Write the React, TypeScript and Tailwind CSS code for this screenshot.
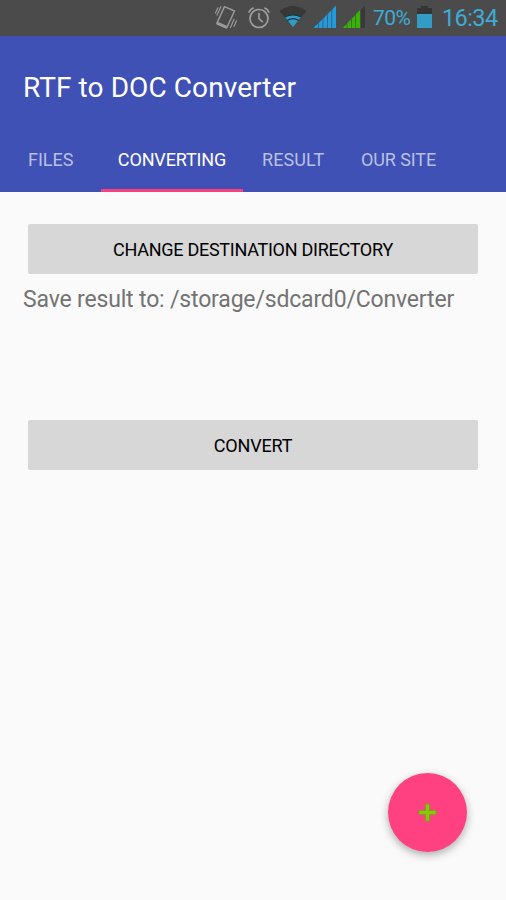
function VibrateIcon() {
  return (
    <svg className="w-[24px] h-[26px]" viewBox="0 0 24 26" fill="none" stroke="#999999">
      <path d="M10.500 2.600 20.500 7 12.800 23.800 2.800 19.400Z" strokeWidth="1.500" strokeLinejoin="round" />
      <path d="M3 19.200 12.800 23.400" strokeWidth="3" />
      <path d="M7 2.300 2.800 11.500M4 3.500 1.200 9.500M20.300 14.800 16.200 24M22.600 16.500 19.800 22.700" strokeWidth="1.200" />
    </svg>
  );
}

function AlarmIcon() {
  return (
    <svg className="w-[24px] h-[24px]" viewBox="0 0 24 24" fill="none" stroke="#a0a0a0">
      <circle cx="12" cy="13.500" r="9" strokeWidth="1.700" />
      <path d="M12 7.800v5.800l3.800 3.600" strokeWidth="1.600" />
      <path d="M1.700 7.600Q3.200 4.200 6.600 2.800M17.400 2.800Q20.800 4.200 22.300 7.600" strokeWidth="1.700" />
    </svg>
  );
}

function WifiIcon() {
  return (
    <svg className="w-[28px] h-[22px]" viewBox="0 0 28 22">
      <path d="M0.500 5Q14-5 27.500 5L14 21.300Z" fill="#383838" />
      <path d="M5.600 10.800Q14 6.500 22.400 10.800L14 21.300Z" fill="#2f9cc4" />
      <path d="M5.800 11Q14 6.600 22.200 11M8.200 14.500Q14 10.800 19.800 14.500" fill="none" stroke="#18343f" strokeWidth="1.200" />
    </svg>
  );
}

function App() {
  return (
    <div className="relative w-[506px] h-[900px] overflow-hidden bg-[#fafafa] font-['Roboto',sans-serif]">
      <div className="h-[36px] bg-[#4b4b4b] flex items-start text-[#3eacd6] whitespace-nowrap">
        <div className="ml-[214px] mt-[4px]">
          <VibrateIcon />
        </div>
        <div className="ml-[9px] mt-[5px]">
          <AlarmIcon />
        </div>
        <div className="ml-[8px] mt-[6px]">
          <WifiIcon />
        </div>
        <svg className="w-[24px] h-[24px] ml-[6px] mt-[5px]" viewBox="0 0 24 24" fill="#229bdc">
          <path d="M1 23V22L5 18.500V23ZM5.700 23V18L9.600 14V23ZM10.300 23V13.500L14 9.500V23ZM14.700 23V9L18.500 5V23ZM19.200 23V4.500L23 0.500V23Z" />
        </svg>
        <svg className="w-[24px] h-[24px] ml-[6px] mt-[5px]" viewBox="0 0 24 24" fill="#35b400">
          <path d="M18 23V4.500L22 0.500V23Z" fill="#393939" />
          <path d="M0.500 23V22L3.700 19V23ZM4.400 23V18L8 14.500V23ZM8.700 23V13.700L12.300 10V23ZM13 23V9L17 5V23Z" />
        </svg>
        <div className="w-[38px] ml-[6px] mt-[3px] text-[21px] leading-[30px] tracking-[-0.6px]">70%</div>
        <svg className="w-[15px] h-[22px] ml-[6px] mt-[6px]" viewBox="0 0 15 22">
          <path d="M0 22V2H4V0H11V2H15V22Z" fill="#353535" />
          <path d="M0 8H15V22H0Z" fill="#339cc3" />
        </svg>
        <div className="ml-[10px] mt-[3px] text-[23.500px] leading-[30px] tracking-[-0.6px]">16:34</div>
      </div>
      <div className="h-[156px] bg-[#3f51b5] whitespace-nowrap">
        <div className="pl-[23px] pt-[32px] text-[28px] leading-[40px] text-white tracking-[0.080px]">
          RTF to DOC Converter
        </div>
        <div className="h-[84px] flex text-[18px] leading-[24px] text-[#b9c0e7]">
          <div className="w-[101px] pl-[28px] pt-[40px]">FILES</div>
          <div className="w-[142px] pt-[40px] text-center text-white tracking-[-0.150px] border-b-[3px] border-[#f83f80]">
            CONVERTING
          </div>
          <div className="w-[99px] pl-[19px] pt-[40px] tracking-[0.100px]">RESULT</div>
          <div className="pl-[19px] pt-[40px] tracking-[-0.100px]">OUR SITE</div>
        </div>
      </div>
      <div className="pt-[32px] px-[28px]">
        <button className="block w-full h-[50px] rounded-[2px] bg-[#d7d7d7] text-black text-[18px] tracking-[-0.270px]">
          CHANGE DESTINATION DIRECTORY
        </button>
        <div className="-ml-[5px] mt-[11px] text-[23px] leading-[30px] tracking-[-0.170px] text-[#737373] whitespace-nowrap">
          Save result to: /storage/sdcard0/Converter
        </div>
        <button className="block w-full h-[50px] mt-[105px] rounded-[2px] bg-[#d7d7d7] text-black text-[18px] tracking-[-0.200px]">
          CONVERT
        </button>
      </div>
      <button className="absolute left-[388px] top-[773px] w-[79px] h-[79px] rounded-full bg-[#ff4081] flex items-center justify-center shadow-[0_3px_8px_rgba(0,0,0,0.32)]">
        <svg className="w-[19px] h-[19px]" viewBox="0 0 19 19">
          <path d="M7 0.500H12V7H18.500V12H12V18.500H7V12H0.500V7H7Z" fill="#879a1c" />
          <path d="M8 1.500H11V8H17.500V11H11V17.500H8V11H1.500V8H8Z" fill="#86c80c" />
        </svg>
      </button>
    </div>
  );
}

export default App;
